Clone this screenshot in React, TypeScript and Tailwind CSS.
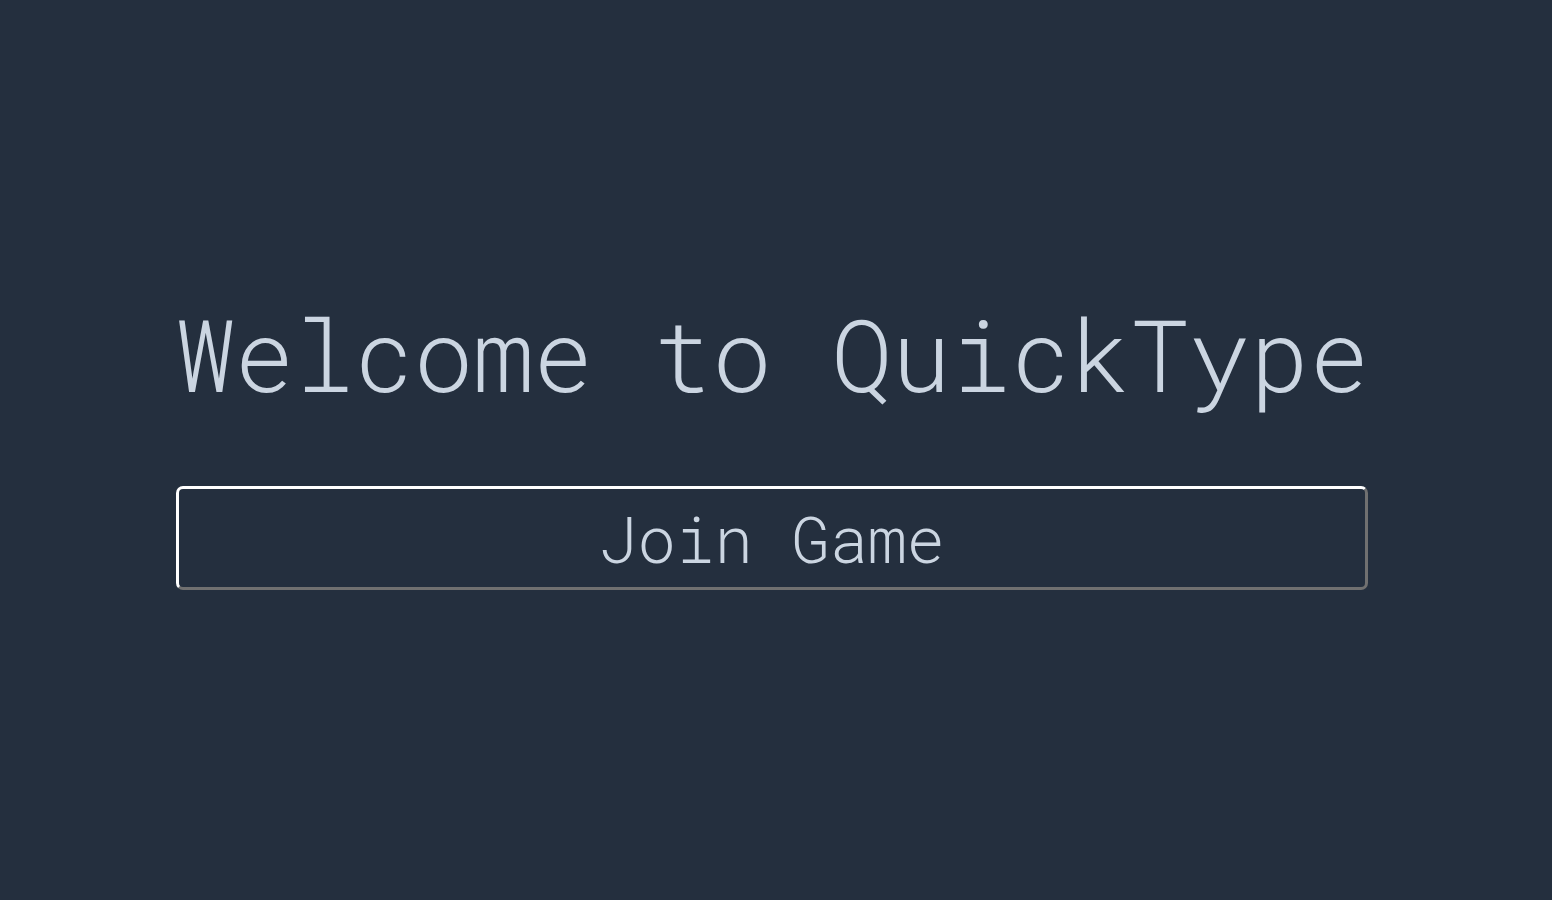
// Landing screen: title + join button, centered on a dark slate page

const mono = { fontFamily: '"Roboto Mono", "DejaVu Sans Mono", "Liberation Mono", monospace' };

export default function App() {
  return (
    <div className="flex h-screen w-full items-center justify-center bg-[#242f3e]" style={mono}>
      <div className="flex w-[1200px] flex-col items-center pb-[6px] pr-[8px]">
        <h1 className="whitespace-nowrap text-[99.5px] font-light leading-none text-[#cbd5e1]">Welcome to QuickType</h1>
        <button
          className="mt-[82px] h-[104px] w-full rounded-[7px] border-[3px] border-t-white border-l-white border-b-[#707070] border-r-[#707070] bg-transparent text-[64px] font-light leading-none text-[#cbd5e1]"
        >
          Join Game
        </button>
      </div>
    </div>
  );
}
